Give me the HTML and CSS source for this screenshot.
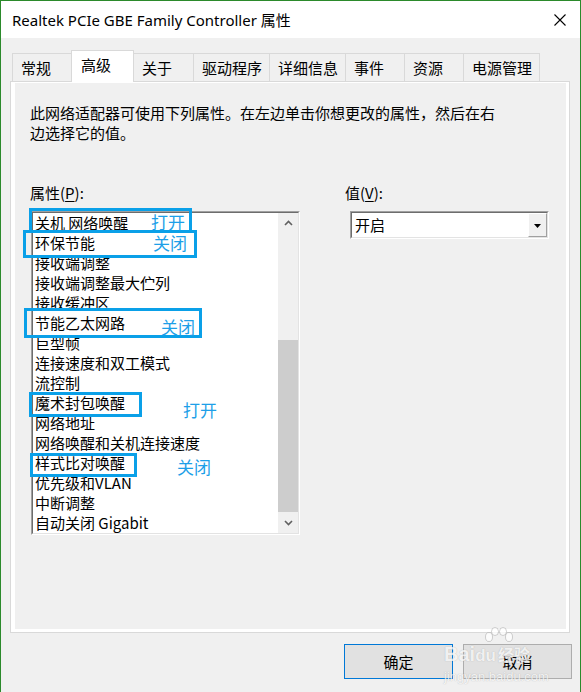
FILE: index.html
```html
<!DOCTYPE html>
<html lang="zh-CN">
<head>
    <meta charset="UTF-8">
    <title>Realtek PCIe GBE Family Controller 属性</title>
    <link rel="stylesheet" href="styles.css">
</head>
<body>
    <div class="window">
        <div class="titlebar">
            <span class="title">Realtek PCIe GBE Family Controller 属性</span>
            <svg class="close" width="12" height="12" viewBox="0 0 12 12">
                <path d="M0.5 0.5 L11.5 11.5 M11.5 0.5 L0.5 11.5" stroke="#000" stroke-width="1.1" fill="none"/>
            </svg>
        </div>

        <div class="content">
            <div class="tabs">
                <div class="tab">常规</div>
                <div class="tab active">高级</div>
                <div class="tab">关于</div>
                <div class="tab">驱动程序</div>
                <div class="tab">详细信息</div>
                <div class="tab">事件</div>
                <div class="tab">资源</div>
                <div class="tab">电源管理</div>
            </div>

            <div class="panel">
                <div class="panel-inner">
                    <p class="desc">此网络适配器可使用下列属性。在左边单击你想更改的属性，然后在右<br>边选择它的值。</p>

                    <div class="fields">
                        <div class="field-props">
                            <div class="label">属性(<u>P</u>):</div>
                            <div class="listbox">
                                <div class="listbox-inner">
                                    <ul class="items">
                                        <li>关机 网络唤醒</li>
                                        <li>环保节能</li>
                                        <li>接收端调整</li>
                                        <li>接收端调整最大伫列</li>
                                        <li>接收缓冲区</li>
                                        <li>节能乙太网路</li>
                                        <li>巨型帧</li>
                                        <li>连接速度和双工模式</li>
                                        <li>流控制</li>
                                        <li>魔术封包唤醒</li>
                                        <li>网络地址</li>
                                        <li>网络唤醒和关机连接速度</li>
                                        <li>样式比对唤醒</li>
                                        <li>优先级和VLAN</li>
                                        <li>中断调整</li>
                                        <li>自动关闭 Gigabit</li>
                                    </ul>
                                    <div class="scrollbar">
                                        <div class="sb-btn">
                                            <svg width="9" height="6" viewBox="0 0 9 6"><polyline points="1,5 4.5,1.5 8,5" fill="none" stroke="#606060" stroke-width="1.6"/></svg>
                                        </div>
                                        <div class="sb-track"><div class="sb-thumb"></div></div>
                                        <div class="sb-btn">
                                            <svg width="9" height="6" viewBox="0 0 9 6"><polyline points="1,1 4.5,4.5 8,1" fill="none" stroke="#606060" stroke-width="1.6"/></svg>
                                        </div>
                                    </div>
                                </div>
                            </div>
                        </div>

                        <div class="field-value">
                            <div class="label">值(<u>V</u>):</div>
                            <div class="combo">
                                <div class="combo-inner">
                                    <span class="combo-text">开启</span>
                                    <span class="combo-btn">
                                        <svg width="7" height="4" viewBox="0 0 7 4"><polygon points="0,0 7,0 3.5,4" fill="#000"/></svg>
                                    </span>
                                </div>
                            </div>
                        </div>
                    </div>
                </div>
            </div>

            <div class="footer">
                <button class="btn primary">确定</button>
                <button class="btn">取消</button>
            </div>
        </div>

        <!-- annotation marks drawn over the screenshot -->
        <div class="mark mark-1"></div>
        <div class="mark mark-2"></div>
        <div class="mark mark-3"></div>
        <div class="mark mark-4"></div>
        <div class="mark mark-5"></div>
        <span class="note note-1">打开</span>
        <span class="note note-2">关闭</span>
        <span class="note note-3">关闭</span>
        <span class="note note-4">打开</span>
        <span class="note note-5">关闭</span>

        <!-- watermark -->
        <div class="watermark">
            <svg class="paw" width="34" height="24" viewBox="0 0 34 24">
                <ellipse cx="7" cy="10" rx="3.5" ry="4.5"/>
                <ellipse cx="13" cy="4.5" rx="3.5" ry="4"/>
                <ellipse cx="21" cy="4.5" rx="3.5" ry="4"/>
                <ellipse cx="27" cy="10" rx="3.5" ry="4.5"/>
            </svg>
            <div class="wm-brand">Bai<span class="wm-du">du</span><span class="wm-cn">经验</span></div>
            <div class="wm-url">jingyan.baidu.com</div>
        </div>
    </div>
</body>
</html>
```

FILE: styles.css
```css
/* Base */
body {
    margin: 0;
    background: #f0f0f0;
    font-family: "Noto Sans CJK SC", sans-serif;
    font-size: 15px;
    color: #000;
}

.window {
    position: relative;
    width: 581px;
    height: 692px;
    box-sizing: border-box;
    border: 1px solid #2b8a2b;
    border-bottom: none;
    background: #f0f0f0;
    overflow: hidden;
}

/* Title bar */
.titlebar {
    height: 37px;
    background: #fff;
    display: flex;
    align-items: center;
    justify-content: space-between;
    padding: 1px 14px 0 11px;
    box-sizing: border-box;
}

.title {
    font-family: "Noto Sans", "Noto Sans CJK SC", sans-serif;
    font-size: 15px;
    line-height: 20px;
}

.close {
    display: block;
    margin-top: -1px;
}

/* Tabs */
.content {
    padding: 12px 8px 0 9px;
}

.tabs {
    display: flex;
    align-items: flex-end;
    height: 31px;
    padding-left: 2px;
    position: relative;
    z-index: 1;
}

.tab {
    height: 28px;
    box-sizing: border-box;
    min-width: 59px;
    padding: 0 7px 0 8px;
    border: 1px solid #d9d9d9;
    border-right: none;
    border-bottom: none;
    line-height: 27px;
    background: #f0f0f0;
    white-space: nowrap;
}

.tab:last-child {
    border-right: 1px solid #d9d9d9;
}

.tab.active {
    height: 32px;
    margin-bottom: -1px;
    min-width: 63px;
    padding-left: 9px;
    background: #fff;
    border-right: 1px solid #d9d9d9;
    line-height: 28px;
}

.tab.active + .tab {
    border-left: none;
}

/* Panel */
.panel {
    width: 560px;
    height: 552px;
    box-sizing: border-box;
    border: 1px solid #d9d9d9;
    background: #fff;
    padding: 1px 3px 3px 4px;
}

.panel-inner {
    height: 100%;
    box-sizing: border-box;
    background: #f0f0f0;
    padding: 20px 15px 0 15px;
}

.desc {
    margin: 0;
    line-height: 20px;
}

.fields {
    display: flex;
    gap: 45px;
    margin-top: 40px;
}

.field-props {
    width: 270px;
}

.label {
    height: 20px;
    line-height: 20px;
    margin-bottom: 8px;
}

.label u {
    text-underline-offset: 2px;
}

/* List box */
.listbox {
    margin-left: 1px;
    width: 269px;
    box-sizing: border-box;
    border: 1px solid;
    border-color: #a0a0a0 #fff #fff #a0a0a0;
}

.listbox-inner {
    display: flex;
    height: 320px;
    background: #fff;
    border: 1px solid;
    border-color: #6d6d6d #e3e3e3 #e3e3e3 #6d6d6d;
}

.items {
    flex: 1;
    margin: 0;
    padding: 0;
    list-style: none;
    overflow: hidden;
}

.items li {
    height: 20px;
    line-height: 20px;
    padding-left: 2px;
    white-space: nowrap;
}

.scrollbar {
    width: 20px;
    display: flex;
    flex-direction: column;
    background: #f0f0f0;
}

.sb-btn {
    height: 20px;
    display: flex;
    align-items: center;
    justify-content: center;
}

.sb-btn svg {
    display: block;
}

.sb-track {
    flex: 1;
}

.sb-thumb {
    margin-top: 107px;
    height: 172px;
    background: #cdcdcd;
}

/* Combo box */
.field-value {
    width: 204px;
}

.combo {
    margin-left: 5px;
    width: 199px;
    height: 28px;
    box-sizing: border-box;
    border: 1px solid;
    border-color: #a0a0a0 #fff #fff #a0a0a0;
}

.combo-inner {
    height: 100%;
    box-sizing: border-box;
    display: flex;
    align-items: center;
    justify-content: space-between;
    background: #fff;
    border: 1px solid;
    border-color: #6d6d6d #e3e3e3 #e3e3e3 #6d6d6d;
}

.combo-text {
    padding-left: 3px;
    line-height: 20px;
}

.combo-btn {
    width: 19px;
    height: 24px;
    box-sizing: border-box;
    display: flex;
    align-items: center;
    justify-content: center;
    background: #f0f0f0;
    border: 1px solid;
    border-color: #fff #a0a0a0 #a0a0a0 #fff;
}

.combo-btn svg {
    display: block;
    margin-top: 1px;
}

/* Footer buttons */
.footer {
    display: flex;
    justify-content: flex-end;
    gap: 10px;
    margin-top: 11px;
}

.btn {
    width: 109px;
    height: 35px;
    padding: 0;
    border: 1px solid #adadad;
    background: #e1e1e1;
    font-family: "Noto Sans CJK SC", sans-serif;
    font-size: 15px;
    color: #000;
}

.btn.primary {
    border-color: #0078d7;
}

/* Annotations */
.mark {
    position: absolute;
    box-sizing: border-box;
    border: 3px solid #0aa0e8;
}

.mark-1 { left: 28px; top: 207px; width: 163px; height: 25px; }
.mark-2 { left: 22px; top: 229px; width: 174px; height: 28px; }
.mark-3 { left: 23px; top: 307px; width: 178px; height: 30px; }
.mark-4 { left: 28px; top: 391px; width: 113px; height: 25px; }
.mark-5 { left: 29px; top: 452px; width: 107px; height: 24px; }

.note {
    position: absolute;
    font-size: 17px;
    line-height: 18px;
    color: #1e9fe8;
}

.note-1 { left: 150px; top: 212px; }
.note-2 { left: 152px; top: 233px; }
.note-3 { left: 160px; top: 317px; }
.note-4 { left: 182px; top: 400px; }
.note-5 { left: 176px; top: 457px; }

/* Watermark */
.watermark {
    position: absolute;
    left: 443px;
    top: 626px;
    width: 110px;
    color: rgba(255, 255, 255, 0.9);
    text-shadow: 0 0 1px rgba(120, 120, 120, 0.6);
    opacity: 0.85;
}

.paw {
    display: block;
    margin-left: 38px;
}

.paw ellipse {
    fill: rgba(255, 255, 255, 0.9);
    stroke: rgba(150, 150, 150, 0.5);
    stroke-width: 1;
}

.wm-brand {
    font-family: "Liberation Sans", sans-serif;
    font-size: 20px;
    font-weight: bold;
    line-height: 18px;
    margin-top: -6px;
}

.wm-du {
    font-size: 17px;
}

.wm-cn {
    font-family: "Noto Sans CJK SC", sans-serif;
    font-size: 16px;
    margin-left: 2px;
}

.wm-url {
    font-family: "Liberation Sans", sans-serif;
    font-size: 13px;
    line-height: 16px;
    margin-top: 4px;
}
```
